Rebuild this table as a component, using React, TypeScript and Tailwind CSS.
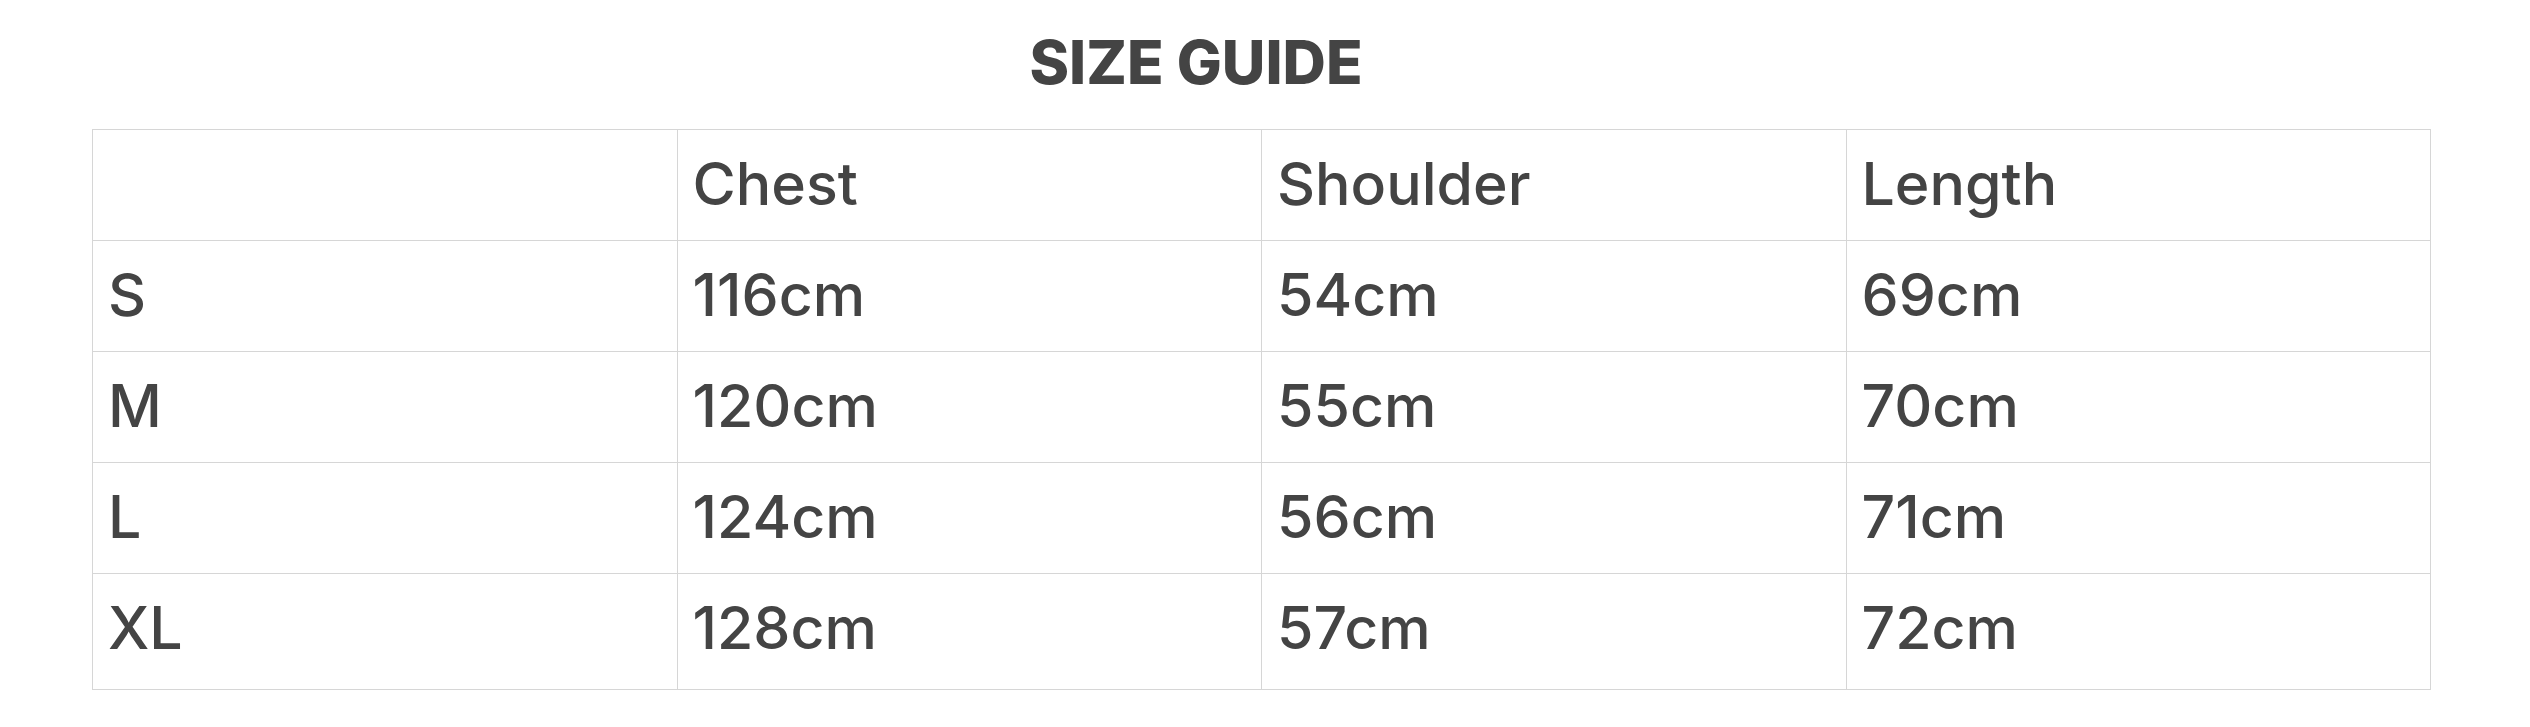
const rows = [
  { size: "S", chest: "116cm", shoulder: "54cm", length: "69cm" },
  { size: "M", chest: "120cm", shoulder: "55cm", length: "70cm" },
  { size: "L", chest: "124cm", shoulder: "56cm", length: "71cm" },
  { size: "XL", chest: "128cm", shoulder: "57cm", length: "72cm" },
];

const cell = "border border-[#d6d6d6] pl-[15px] pt-[19px] pb-[22px] text-left font-medium w-1/4 align-top";

const App = () => {
  return (
    <div className="bg-white w-[2530px] h-[727px] text-[#444444] font-['Inter','Liberation_Sans',Arial,sans-serif]">
      <div className="pt-[27px] pr-[138px] text-center">
        <h1 className="text-[60px] leading-[70px] font-extrabold">SIZE GUIDE</h1>
      </div>
      <table className="ml-[92px] mt-[32px] w-[2339px] border-collapse table-fixed text-[59px] leading-[69px]">
        <thead>
          <tr>
            <th className={cell}></th>
            <th className={cell}>Chest</th>
            <th className={cell}>Shoulder</th>
            <th className={cell}>Length</th>
          </tr>
        </thead>
        <tbody>
          {rows.map((r, i) => (
            <tr key={r.size}>
              <td className={i === rows.length - 1 ? cell + " pb-[27px]" : cell}>{r.size}</td>
              <td className={i === rows.length - 1 ? cell + " pb-[27px]" : cell}>{r.chest}</td>
              <td className={i === rows.length - 1 ? cell + " pb-[27px]" : cell}>{r.shoulder}</td>
              <td className={i === rows.length - 1 ? cell + " pb-[27px]" : cell}>{r.length}</td>
            </tr>
          ))}
        </tbody>
      </table>
    </div>
  );
};

export default App;
